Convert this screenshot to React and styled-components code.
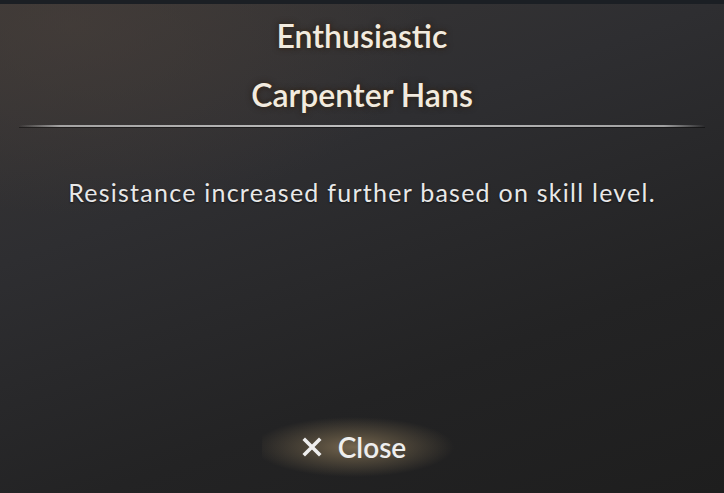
import React from "react";
import styled, { createGlobalStyle } from "styled-components";

const GlobalStyle = createGlobalStyle`
  html, body {
    margin: 0;
    padding: 0;
    background: #1f1f20;
  }
  * {
    box-sizing: border-box;
  }
`;

const Panel = styled.div`
  width: 724px;
  height: 493px;
  display: flex;
  flex-direction: column;
  align-items: center;
  overflow: hidden;
  font-family: Lato, "Open Sans", sans-serif;
  background:
    radial-gradient(ellipse 70% 55% at 10% 5%, rgba(72, 63, 58, 0.6), rgba(70, 62, 58, 0) 70%),
    linear-gradient(160deg, #3a3736 0%, #2e2e31 35%, #232324 70%, #1e1e1e 100%);
`;

const TopStrip = styled.div`
  width: 100%;
  height: 4px;
  background: #1b1f24;
`;

const Title = styled.div`
  color: #f2ebdf;
  font-size: 32px;
  font-weight: 600;
  line-height: 36px;
  margin-top: ${(p) => p.$top}px;
  text-shadow: 0 0 3px #3a2b1c, 0 0 6px rgba(40, 28, 16, 0.8);
`;

const Divider = styled.div`
  width: 686px;
  height: 2px;
  margin-top: 12px;
  background: linear-gradient(
    90deg,
    rgba(200, 200, 200, 0) 0%,
    rgba(200, 200, 200, 0.75) 6%,
    rgba(215, 215, 215, 0.85) 50%,
    rgba(200, 200, 200, 0.75) 94%,
    rgba(200, 200, 200, 0) 100%
  );
  box-shadow: 0 1px 0 rgba(0, 0, 0, 0.4);
`;

const Description = styled.div`
  margin-top: 50px;
  color: #e8e8e8;
  font-size: 25px;
  line-height: 30px;
  letter-spacing: 1.25px;
  text-shadow: 0 1px 2px rgba(0, 0, 0, 0.6);
`;

const Spacer = styled.div`
  flex: 1;
`;

const CloseButton = styled.button`
  margin-bottom: 16px;
  width: 200px;
  height: 60px;
  display: flex;
  align-items: center;
  justify-content: center;
  gap: 16px;
  padding: 0 16px 0 0;
  border: none;
  cursor: pointer;
  color: #eeeeee;
  font-family: Lato, "Open Sans", sans-serif;
  font-size: 28px;
  font-weight: 600;
  background: radial-gradient(
    ellipse 50% 50% at 46% 50%,
    rgba(120, 104, 80, 0.95) 0%,
    rgba(100, 88, 68, 0.72) 40%,
    rgba(60, 52, 40, 0) 100%
  );
`;

const CloseIcon = styled.svg`
  width: 20px;
  height: 20px;
`;

export default function App() {
  return (
    <>
      <GlobalStyle />
      <Panel>
        <TopStrip />
        <Title $top={14}>Enthusiastic</Title>
        <Title $top={23}>Carpenter Hans</Title>
        <Divider />
        <Description>Resistance increased further based on skill level.</Description>
        <Spacer />
        <CloseButton>
          <CloseIcon viewBox="0 0 20 20">
            <path d="M3 3 L17 17 M17 3 L3 17" stroke="#eeeeee" strokeWidth="3.6" strokeLinecap="square" />
          </CloseIcon>
          Close
        </CloseButton>
      </Panel>
    </>
  );
}
